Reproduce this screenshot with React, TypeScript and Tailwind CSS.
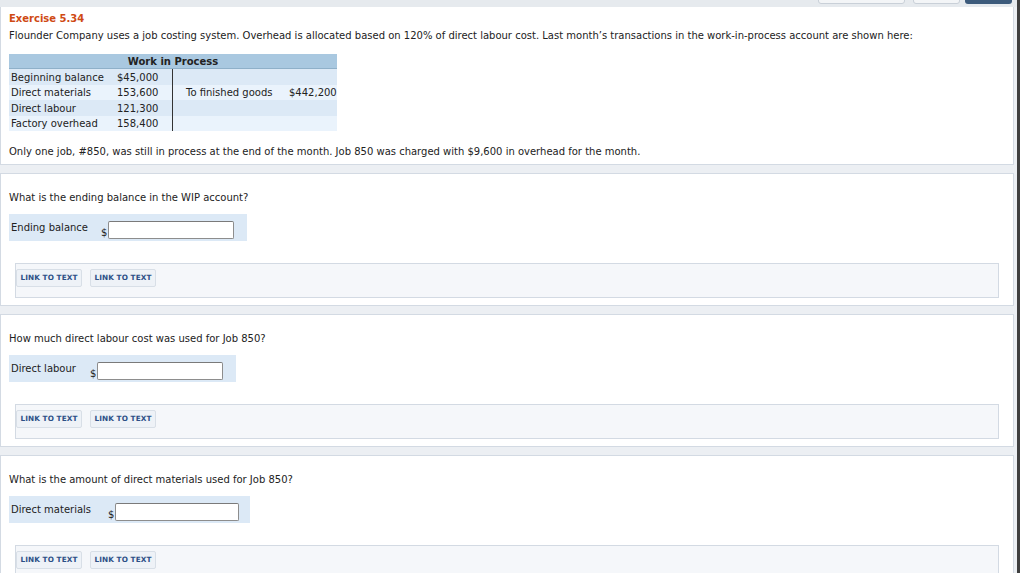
import React from "react";

const font = { fontFamily: '"DejaVu Sans", Verdana, sans-serif' };

function LinkButtons() {
  return (
    <div className="mx-[14px] h-[35px] border border-[#d3dae3] bg-[#f5f7fa] flex items-start pt-[5px] gap-[8px]">
      {[0, 1].map((i) => (
        <div
          key={i}
          className="h-[18px] w-[66px] flex items-center justify-center border border-[#d8dfe7] rounded-[2px] bg-[#eef2f7] text-[7.3px] font-bold text-[#2c4f86] tracking-[0.1px]"
        >
          LINK TO TEXT
        </div>
      ))}
    </div>
  );
}

function Question({
  q,
  label,
  boxW,
  labelW,
  inputW,
}: {
  q: string;
  label: string;
  boxW: number;
  labelW: number;
  inputW: number;
}) {
  return (
    <div className="bg-white border border-[#d3dae3] mt-[8px] pt-[17px] pb-[7px]">
      <div className="px-[8px] text-[10px] leading-[13px] text-[#222]">{q}</div>
      <div className="px-[8px] mt-[10px]">
        <div
          className="bg-[#dce9f6] h-[27px] flex items-start pl-[2px]"
          style={{ width: boxW }}
        >
          <div className="mt-[7px] text-[10px] leading-[13px] text-[#222]" style={{ width: labelW }}>
            {label}
          </div>
          <div className="flex items-end mt-[7px]">
            <span className="w-[7px] text-[10px] leading-[10px] mb-[1px] text-[#222]">$</span>
            <div
              className="h-[18px] bg-white border border-[#8d8d8d] rounded-[2px] border-t-[#7a7a7a]"
              style={{ width: inputW }}
            />
          </div>
        </div>
      </div>
      <div className="mt-[22px]">
        <LinkButtons />
      </div>
    </div>
  );
}

export default function App() {
  const rows = [
    ["Beginning balance", "$45,000", "", ""],
    ["Direct materials", "153,600", "To finished goods", "$442,200"],
    ["Direct labour", "121,300", "", ""],
    ["Factory overhead", "158,400", "", ""],
  ];
  return (
    <div className="w-[1024px] h-[573px] overflow-hidden bg-white flex" style={font}>
      <div className="w-[1017px] h-full bg-[#eceff3] relative">
        {/* top strip buttons */}
        <div className="h-[7px] bg-[#e6eaee] relative">
          <div className="absolute left-[818px] top-[-6px] w-[87px] h-[10px] border border-[#c9d0d8] rounded-[3px] bg-[#f3f5f7]" />
          <div className="absolute left-[913px] top-[-6px] w-[47px] h-[10px] border border-[#c9d0d8] rounded-[3px] bg-[#f3f5f7]" />
          <div className="absolute left-[965px] top-[-6px] w-[47px] h-[10px] rounded-[3px] bg-[#3d5b7c]" />
        </div>
        <div className="w-[1014px]">
          {/* panel 1 */}
          <div className="bg-white border border-[#d3dae3] border-t-0 pt-[5px] pb-[6px]">
            <div className="px-[8px] text-[10px] leading-[13px] font-bold text-[#cf4a13]">Exercise 5.34</div>
            <div className="px-[8px] mt-[4px] text-[10px] leading-[13px] text-[#222]">
              Flounder Company uses a job costing system. Overhead is allocated based on 120% of direct labour cost. Last month’s transactions in the work-in-process account are shown here:
            </div>
            <div className="ml-[8px] mt-[12px] w-[328px] text-[10px] text-[#222]">
              <div className="h-[15px] bg-[#a9c8e0] border-b border-[#8fb0c9] flex items-center justify-center font-bold leading-[13px]">
                Work in Process
              </div>
              {rows.map((r, i) => (
                <div
                  key={i}
                  className={`h-[15.5px] flex items-stretch leading-[13px] ${i % 2 === 0 ? "bg-[#dce9f6]" : "bg-[#eaf3fc]"}`}
                >
                  <div className="w-[108px] pl-[2px] flex items-center pt-[1px]">{r[0]}</div>
                  <div className="w-[56px] flex items-center pt-[1px] border-r border-[#333]">{r[1]}</div>
                  <div className="w-[115px] pl-[13px] flex items-center pt-[1px]">{r[2]}</div>
                  <div className="flex-1 pl-[1px] flex items-center pt-[1px]">{r[3]}</div>
                </div>
              ))}
            </div>
            <div className="px-[8px] mt-[14px] text-[10px] leading-[13px] text-[#222]">
              Only one job, #850, was still in process at the end of the month. Job 850 was charged with $9,600 in overhead for the month.
            </div>
          </div>
          <Question q="What is the ending balance in the WIP account?" label="Ending balance" boxW={238} labelW={90} inputW={126} />
          <Question q="How much direct labour cost was used for Job 850?" label="Direct labour" boxW={227} labelW={79} inputW={126} />
          <Question q="What is the amount of direct materials used for Job 850?" label="Direct materials" boxW={241} labelW={97} inputW={124} />
        </div>
      </div>
      <div className="w-[3px] h-full bg-[#3f3f3f]" />
      <div className="flex-1 h-full bg-white" />
    </div>
  );
}
